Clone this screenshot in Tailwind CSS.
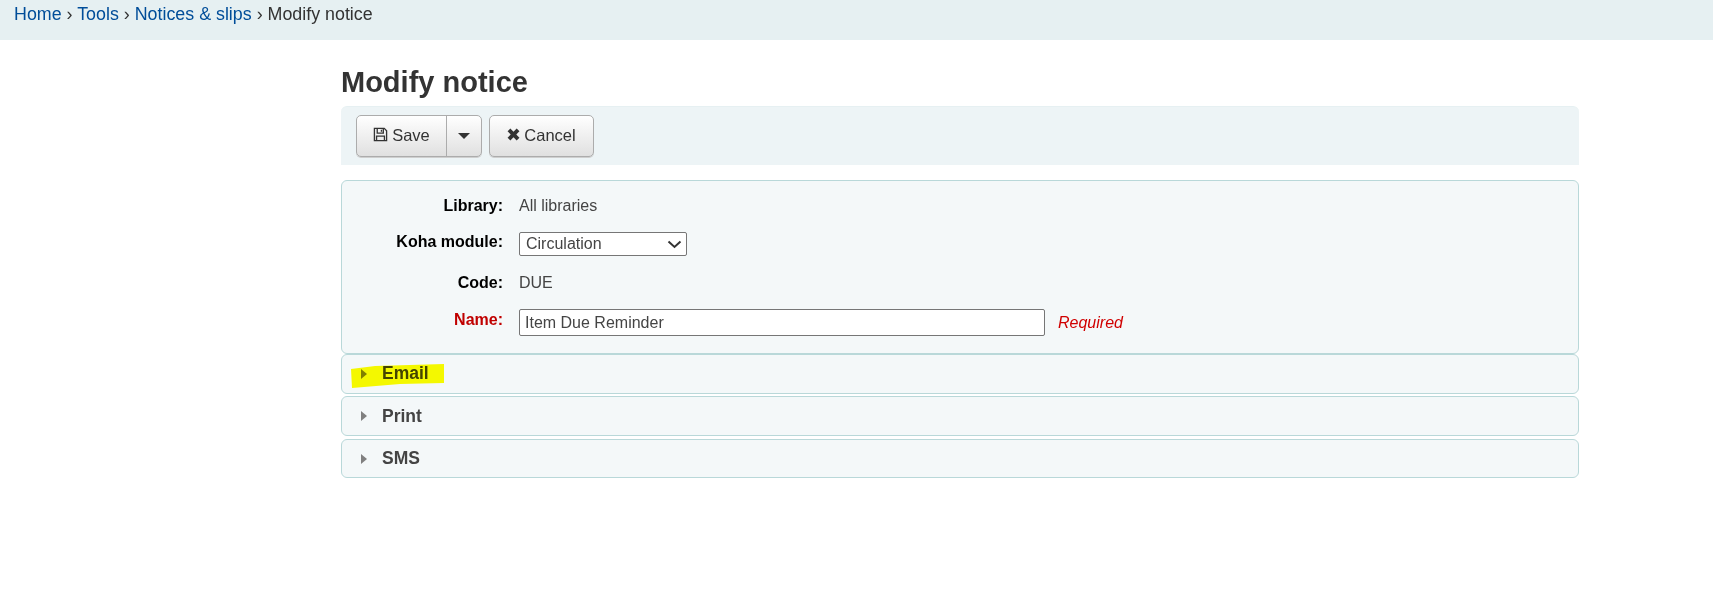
<!DOCTYPE html>
<html lang="en">
<head>
  <meta charset="UTF-8" />
  <title>Modify notice</title>
  <script src="https://cdn.jsdelivr.net/npm/@tailwindcss/browser@4"></script>
</head>
<body class="bg-white text-[#333] font-['Liberation_Sans',Arial,sans-serif] text-[16px]">
  <!-- breadcrumb -->
  <nav class="h-[40px] bg-[#e6f0f2] pl-[14px] text-[17.85px] leading-[29px]">
    <a class="text-[#004d99]">Home</a> › <a class="text-[#004d99]">Tools</a> › <a class="text-[#004d99]">Notices &amp; slips</a> › <span>Modify notice</span>
  </nav>

  <main class="ml-[341px] w-[1238px]">
    <h1 class="mt-[22px] h-[44px] text-[29px] leading-[41px] font-bold text-[#333]">Modify notice</h1>

    <!-- toolbar -->
    <div class="flex items-center h-[59px] pl-[15px] gap-[7px] rounded-t-[6px] bg-[#edf4f6] border-t border-[#e6f0f2]">
      <div class="flex h-[42px] rounded-[5px] border border-[#acacac] bg-gradient-to-b from-white to-[#e0e0e0] shadow-[0_1px_0_#cfcfcf]">
        <button class="flex items-center gap-[4px] w-[90px] justify-center pb-[2px] text-[16.5px] text-[#333] border-r border-[#acacac]">
          <svg class="w-[15px] h-[15px] -mt-[1px]" viewBox="0 0 16 16" fill="none" stroke="#333" stroke-width="1.4"><path d="M1.5 1.5h10.5l2.5 2.5v10.5h-13z"/><path d="M4.5 1.5v5h6.5v-5M9 3v2"/><path d="M3.8 14.5v-4.8h8.4v4.8"/></svg>
          Save
        </button>
        <button class="flex items-center justify-center w-[34px]">
          <span class="w-0 h-0 border-x-[6px] border-x-transparent border-t-[6px] border-t-[#333]"></span>
        </button>
      </div>
      <button class="flex items-center justify-center gap-[4px] h-[42px] w-[105px] pb-[2px] rounded-[5px] border border-[#acacac] bg-gradient-to-b from-white to-[#e0e0e0] shadow-[0_1px_0_#cfcfcf] text-[16.5px] text-[#333]">
        <svg class="w-[13px] h-[13px] -mt-[1px]" viewBox="0 0 14 14"><path d="M3.6 0.6 7 4 10.4 0.6 13.4 3.6 10 7 13.4 10.4 10.4 13.4 7 10 3.6 13.4 0.6 10.4 4 7 0.6 3.6z" fill="#333"/></svg>
        Cancel
      </button>
    </div>

    <!-- form panel -->
    <section class="mt-[15px] h-[174px] rounded-[6px] border border-[#b9d8d9] bg-[#f4f8f9] pt-[15px]">
      <div class="flex items-center h-[20px]">
        <span class="w-[161px] text-right font-bold text-black">Library:</span>
        <span class="ml-[16px] text-[#444]">All libraries</span>
      </div>
      <div class="flex items-center mt-[16px] h-[24px]">
        <span class="w-[161px] -mt-[5px] text-right font-bold text-black">Koha module:</span>
        <div class="relative ml-[16px] flex items-center w-[168px] h-[24px] rounded-[2px] border border-[#767676] bg-white pl-[6px] text-[#444]">
          Circulation
          <svg class="absolute right-[4px] top-[7px] w-[15px] h-[9px]" viewBox="0 0 15 9" fill="none" stroke="#333" stroke-width="2"><path d="M1.5 1.5 7.5 7 13.5 1.5"/></svg>
        </div>
      </div>
      <div class="flex items-center mt-[17px] h-[20px]">
        <span class="w-[161px] text-right font-bold text-black">Code:</span>
        <span class="ml-[16px] text-[#444]">DUE</span>
      </div>
      <div class="flex items-center mt-[16px] h-[27px]">
        <span class="w-[161px] -mt-[5px] text-right font-bold text-[#c00000]">Name:</span>
        <div class="ml-[16px] flex items-center w-[526px] h-[27px] rounded-[2px] border border-[#767676] bg-white pl-[5px] text-[#444]">Item Due Reminder</div>
        <em class="ml-[13px] text-[#d00000]">Required</em>
      </div>
    </section>

    <!-- collapsed sections -->
    <section class="relative flex items-center h-[40px] rounded-[6px] border border-[#b9d8d9] bg-[#f4f8f9]">
      <span class="ml-[19px] w-0 h-0 border-y-[5px] border-y-transparent border-l-[6px] border-l-[#808080]"></span>
      <span class="ml-[15px] -mt-[2px] text-[17.5px] font-bold text-[#444]">Email</span>
      <svg class="absolute left-[8px] top-[8px] w-[94px] h-[25px] mix-blend-multiply" viewBox="0 0 94 25"><path d="M1 6 25 3 94 1 94 20 50 21 2 25z" fill="#ffff00"/></svg>
    </section>
    <section class="mt-[2px] flex items-center h-[40px] rounded-[6px] border border-[#b9d8d9] bg-[#f4f8f9]">
      <span class="ml-[19px] w-0 h-0 border-y-[5px] border-y-transparent border-l-[6px] border-l-[#808080]"></span>
      <span class="ml-[15px] text-[17.5px] font-bold text-[#444]">Print</span>
    </section>
    <section class="mt-[3px] flex items-center h-[39px] rounded-[6px] border border-[#b9d8d9] bg-[#f4f8f9]">
      <span class="ml-[19px] w-0 h-0 border-y-[5px] border-y-transparent border-l-[6px] border-l-[#808080]"></span>
      <span class="ml-[15px] text-[17.5px] font-bold text-[#444]">SMS</span>
    </section>
  </main>
</body>
</html>
